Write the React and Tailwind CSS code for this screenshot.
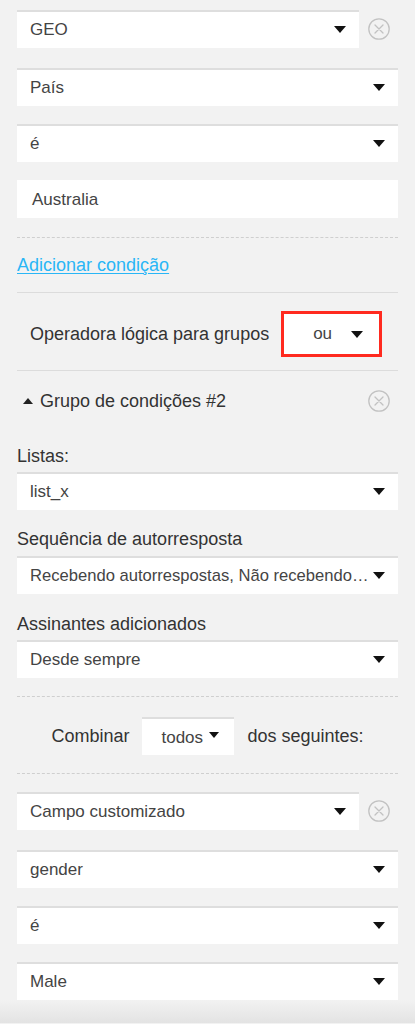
import React from 'react';

const font = { fontFamily: '"Liberation Sans", Arial, sans-serif' };

const Arrow = ({ small }) => (
  <svg width={small ? 10 : 12} height={small ? 6 : 7} viewBox="0 0 12 7" className="shrink-0">
    <path d="M0 0h12L6 7z" fill="#111" />
  </svg>
);

const CloseIcon = () => (
  <svg width="22" height="22" viewBox="0 0 22 22">
    <circle cx="11" cy="11" r="10.2" fill="none" stroke="#c2c2c2" strokeWidth="1.3" />
    <path d="M7 7l8 8M15 7l-8 8" stroke="#c2c2c2" strokeWidth="1.3" strokeLinecap="round" />
  </svg>
);

// white select with the light top edge
const Select = ({ value, className = '', textClass = 'text-[17px]' }) => (
  <div className={`flex h-[38px] items-center justify-between bg-white pl-[13px] pr-[13px] text-[#444] shadow-[inset_0_2px_0_#dedede] ${textClass} ${className}`}>
    <span className="whitespace-nowrap pt-[2px]">{value}</span>
    <Arrow />
  </div>
);

// select with a remove button on its right
const RemovableSelect = ({ value, className = '' }) => (
  <div className={`flex items-center ${className}`}>
    <Select value={value} className="flex-1" />
    <div className="flex w-[39px] justify-center">
      <CloseIcon />
    </div>
  </div>
);

const Label = ({ children, className = '' }) => (
  <div className={`h-[20px] text-[18px] leading-[20px] text-[#333] ${className}`}>{children}</div>
);

export default function App() {
  return (
    <div className="min-h-[1024px] w-full bg-[#f2f2f2]" style={font}>
      <div className="px-[17px] pt-[10px]">
        <RemovableSelect value="GEO" />
        <Select value="País" className="mt-[20px]" />
        <Select value="é" className="mt-[18px]" />
        <div className="mt-[18px] flex h-[38px] items-center bg-white pl-[15px] pt-[2px] text-[17px] text-[#444]">
          Australia
        </div>

        <div className="mt-[19px] border-t border-dashed border-[#cfcfcf]" />

        <a href="#" className="mt-[17px] block h-[20px] text-[18px] leading-[20px] text-[#29b6f6] underline decoration-1 underline-offset-2">
          Adicionar condição
        </a>

        <div className="mt-[17px] border-t border-[#dcdcdc]" />

        <div className="mt-[18px] flex items-center pl-[13px]">
          <span className="text-[18px] text-[#333]">Operadora lógica para grupos</span>
          <div className="ml-[12px] flex h-[46px] w-[101px] items-center justify-between border-[3px] border-[#ff2a1f] bg-white pl-[29px] pr-[16px]">
            <span className="text-[17px] text-[#444]">ou</span>
            <Arrow />
          </div>
        </div>

        <div className="mt-[13px] border-t border-[#dcdcdc]" />

        <div className="mt-[19px] flex h-[22px] items-center">
          <svg width="10" height="6" viewBox="0 0 10 6" className="ml-[6px] mr-[7px]">
            <path d="M0 6h10L5 0z" fill="#222" />
          </svg>
          <span className="flex-1 text-[18px] text-[#333]">Grupo de condições #2</span>
          <div className="flex w-[39px] justify-center">
            <CloseIcon />
          </div>
        </div>

        <Label className="mt-[34px]">Listas:</Label>
        <Select value="list_x" className="mt-[6px]" />

        <Label className="mt-[19px]">Sequência de autorresposta</Label>
        <Select value="Recebendo autorrespostas, Não recebendo…" textClass="text-[16.6px]" className="mt-[7px]" />

        <Label className="mt-[20px]">Assinantes adicionados</Label>
        <Select value="Desde sempre" className="mt-[6px]" />

        <div className="mt-[18px] border-t border-dashed border-[#cfcfcf]" />

        <div className="mt-[20px] flex items-center justify-center text-[18px] text-[#333]">
          <span>Combinar</span>
          <div className="mx-[13px] flex h-[38px] w-[92px] items-center bg-white pl-[19px] pt-[4px] text-[17px] text-[#444] shadow-[inset_0_2px_0_#dedede]">
            <span>todos</span>
            <span className="ml-[6px] -mt-[6px]"><Arrow small /></span>
          </div>
          <span>dos seguintes:</span>
        </div>

        <div className="mt-[18px] border-t border-dashed border-[#cfcfcf]" />

        <RemovableSelect value="Campo customizado" className="mt-[18px]" />
        <Select value="gender" className="mt-[20px]" />
        <Select value="é" className="mt-[18px]" />
        <Select value="Male" className="mt-[18px]" />
      </div>
      <div className="h-[23px] bg-gradient-to-b from-[#f2f2f2] to-[#e3e3e3]" />
    </div>
  );
}
